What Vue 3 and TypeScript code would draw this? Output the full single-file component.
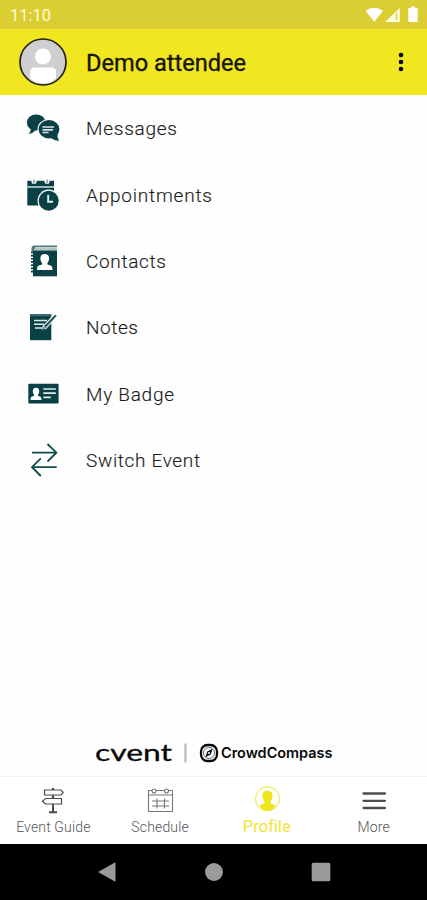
<script setup lang="ts">
interface MenuItem {
  id: string
  label: string
  width: number
}

const menu: MenuItem[] = [
  { id: 'messages', label: 'Messages', width: 91 },
  { id: 'appointments', label: 'Appointments', width: 126 },
  { id: 'contacts', label: 'Contacts', width: 80 },
  { id: 'notes', label: 'Notes', width: 52 },
  { id: 'badge', label: 'My Badge', width: 88 },
  { id: 'switch', label: 'Switch Event', width: 114 },
]
</script>

<template>
  <div class="screen">
    <div class="status">
      <span class="time">11:10</span>
      <svg class="status-icons" width="54" height="18" viewBox="0 0 54 18">
        <path d="M.5 4.700Q9.300-1.300 18 4.700L9.300 15.700Z" fill="#fff" />
        <path fill-rule="evenodd" d="M20 16 34.800 2v14Z M30.800 7v7h1.400V7Z" fill="#fffde0" />
        <path d="M44 2h2V.5h4V2h2q.7 0 .7.700v12.600q0 .7-.7.700h-8q-.7 0-.7-.700V2.700q0-.7.700-.700Z" fill="#fff" />
      </svg>
    </div>

    <header class="header">
      <svg class="avatar" width="50" height="50" viewBox="0 0 50 50">
        <circle cx="25" cy="25" r="23" fill="#cfcfd1" stroke="#222218" stroke-width="1.700" />
        <circle cx="25" cy="19.500" r="8" fill="#fff" />
        <path d="M12 41.500V35q0-4.500 4.500-4.500h17q4.500 0 4.500 4.500v6.500Q32.500 46.500 25 46.500T12 41.500Z" fill="#fff" />
      </svg>
      <h1 class="name">Demo attendee</h1>
      <svg class="kebab" width="6" height="22" viewBox="0 0 6 22">
        <circle cx="3" cy="4" r="2.300" />
        <circle cx="3" cy="11" r="2.300" />
        <circle cx="3" cy="18" r="2.300" />
      </svg>
    </header>

    <main class="menu">
      <div v-for="item in menu" :key="item.id" class="row">
        <svg class="row-icon" width="36" height="36" viewBox="0 -0.500 36 36">
          <g v-if="item.id === 'messages'">
            <ellipse cx="11.200" cy="12" rx="9.400" ry="8.100" fill="#0a4147" />
            <path d="M3.500 15 6 18q-.5 4-2.500 5.500Q8 23 11 19Z" fill="#0a4147" />
            <ellipse cx="24" cy="18.800" rx="11.500" ry="10.300" fill="#fff" />
            <ellipse cx="24" cy="18.800" rx="10.400" ry="9.200" fill="#0a4147" />
            <path d="M32.500 22q-.7 4.500 1.500 8.500-5-.5-9-3.500Z" fill="#0a4147" />
            <path d="M17.500 16.500h11.500M17.500 19.300h10.500M17.500 22h6" stroke="#d9e7e6" stroke-width="1.700" />
          </g>
          <g v-else-if="item.id === 'appointments'">
            <path d="M2.300 3.300H29V28H2.300Z" fill="#0a4147" />
            <path d="M2.300 9.500H29" stroke="#b9cccc" stroke-width="1.700" />
            <circle cx="9" cy="4" r="2.500" fill="#fff" />
            <circle cx="22" cy="4" r="2.500" fill="#fff" />
            <path d="M9 2v4M22 2v4" stroke="#6b8989" stroke-width="1.300" />
            <circle cx="23.700" cy="23.300" r="11.200" fill="#fff" />
            <circle cx="23.700" cy="23.300" r="10" fill="#0a4147" />
            <path d="M23.200 17.300v7h4.800" fill="none" stroke="#e6f2f1" stroke-width="1.900" />
          </g>
          <g v-else-if="item.id === 'contacts'">
            <path d="M6.500 8V5q0-3 3-3H32v1.500H11V6h21v2Z" fill="#54797b" />
            <path d="M10 3.800h22v3H9Z" fill="#b4c5c5" />
            <path d="M8 7.500h24v25.300H8Z" fill="#0a4147" />
            <path d="M7 8v22" stroke="#0a4147" stroke-width="2" stroke-dasharray="1.700 1.500" />
            <path d="M19.700 10.500c3.100 0 4.600 2 4.400 4.800-.1 1.900-.9 3.400-1.700 4.200v1.400l3.800 1.400q1.300.6 1.300 4.300H12q0-3.700 1.300-4.300l3.800-1.400v-1.400c-.8-.8-1.600-2.300-1.700-4.200-.2-2.800 1.200-4.800 4.300-4.800Z" fill="#fff" />
          </g>
          <g v-else-if="item.id === 'notes'">
            <path d="M5 4.700h21.300v26H5Z" fill="#0a4147" />
            <path d="M5 6.200h21" stroke="#517779" stroke-width="1" />
            <path d="M9 11h13M9 14.800h10M10 18.600h8" stroke="#e1ecec" stroke-width="1.500" />
            <path d="M19 18.500 31.500 5" stroke="#fff" stroke-width="4.500" />
            <path d="m16.500 21 2.500-4.500L30.500 5l1.500 1.300L21 18.700Z" fill="#7e9c9d" />
            <path d="m20 17 10.500-11" stroke="#0a4147" stroke-width="1.200" />
          </g>
          <g v-else-if="item.id === 'badge'">
            <rect x="3.300" y="7.300" width="30.300" height="19.700" rx="1" fill="#0a4147" />
            <path d="M11 11.300c2.300 0 3.400 1.500 3.200 3.700-.1 1.500-.7 2.600-1.300 3.200v1l2.600 1.100q1 .5 1 3.300h-11q0-2.800 1-3.300l2.600-1.100v-1c-.6-.6-1.200-1.700-1.300-3.200-.2-2.200.9-3.700 3.200-3.700Z" fill="#fff" />
            <path d="M18.300 12.500h12.500M18.300 16.700h12.500M18.300 20.900h7.500" stroke="#e0ebeb" stroke-width="1.700" />
          </g>
          <g v-else fill="none" stroke="#12494d" stroke-width="1.800">
            <path d="M7 10.200h24M22.500 1.500l8.900 8.700-8.900 8.800" />
            <path d="M31.700 24.700H7.500M15.800 15.900 7 24.700l8.800 8.800" />
          </g>
        </svg>
        <svg class="row-label" width="200" height="28" viewBox="0 0 200 28">
          <text x="0" y="20.500" :textLength="item.width">{{ item.label }}</text>
        </svg>
      </div>
    </main>

    <div class="brands">
      <svg width="240" height="30" viewBox="0 0 240 30">
        <text class="cvent" x="0" y="22.800" textLength="77" lengthAdjust="spacingAndGlyphs">cvent</text>
        <path d="M90.500 5.500v19" stroke="#bdbdbd" stroke-width="2.400" />
        <rect x="106" y="7" width="16" height="16" rx="6.500" fill="none" stroke="#090909" stroke-width="2.300" />
        <circle cx="114" cy="15" r="5.500" fill="none" stroke="#444" stroke-width=".8" />
        <path d="m117.500 10.800-1.700 5.700-5.300 2.700 1.700-5.700Z" fill="#111" />
        <circle cx="114" cy="15" r="1" fill="#fff" />
        <text class="crowd" x="126" y="20.200" textLength="111.500" lengthAdjust="spacingAndGlyphs">CrowdCompass</text>
      </svg>
    </div>

    <nav class="tabs">
      <div class="tab">
        <svg width="28" height="28" viewBox="0 0 28 28" fill="none" stroke="#4c4c4c" stroke-width="1.200">
          <path d="M5.500 4H22l2.300 2.500L22 9H5.500ZM22.500 12.500H6.500L3.500 15.200l3 2.800h16Z" />
          <path d="M14 2v2M14 9v3.500" stroke-width="2.200" />
          <path d="M14 18v8M10 26.300h8" stroke-width="2" />
        </svg>
        <span>Event Guide</span>
      </div>
      <div class="tab">
        <svg width="28" height="28" viewBox="0 0 28 28" fill="none" stroke="#777" stroke-width="1.100">
          <path d="M6 4.500H2.500V25.500h24V4.500h-4M10 4.500h8M2.500 9h24" />
          <circle cx="8" cy="5" r="2" />
          <circle cx="20.500" cy="5" r="2" />
          <path d="M6 15h17M6 20h17M11 12.500v10M18.500 12.500v10" />
        </svg>
        <span>Schedule</span>
      </div>
      <div class="tab active">
        <svg width="28" height="28" viewBox="0 0 28 28">
          <circle cx="14.500" cy="12.800" r="12" fill="none" stroke="#efe52a" stroke-width="1" />
          <path d="M14.500 4.800c3.900 0 5.500 2.700 5 6.200-.2 2-1 3.500-1.900 4.500v1.700l5 2.200q-3 5.200-8.100 5.200t-8.100-5.200l5-2.200v-1.700c-.9-1-1.700-2.500-1.900-4.500-.5-3.500 1.100-6.200 5-6.200Z" fill="#f0e51b" />
        </svg>
        <span>Profile</span>
      </div>
      <div class="tab">
        <svg width="28" height="28" viewBox="0 0 28 28" stroke="#4d4d4f" stroke-width="2.300" stroke-linecap="round">
          <path d="M3.500 7.500h21.400M3.500 14.800h21.400M3.500 22h21.400" />
        </svg>
        <span>More</span>
      </div>
    </nav>

    <div class="system">
      <svg width="20" height="22" viewBox="0 0 20 22"><path d="M1 11 18.500 1.200v19.600Z" /></svg>
      <svg width="20" height="22" viewBox="0 0 20 22"><circle cx="10" cy="11" r="9" /></svg>
      <svg width="20" height="22" viewBox="0 0 20 22"><rect x=".7" y="1.700" width="18.600" height="18.600" rx="1.500" /></svg>
    </div>
  </div>
</template>

<style>
body {
  margin: 0;
}
</style>

<style scoped>
.screen {
  width: 427px;
  height: 900px;
  display: flex;
  flex-direction: column;
  overflow: hidden;
  background: #fefefe;
  font-family: Roboto, "Liberation Sans", sans-serif;
}
svg {
  display: block;
  flex: none;
}
.status {
  flex: none;
  box-sizing: border-box;
  height: 28.500px;
  padding: 2px 8px 0 10px;
  display: flex;
  align-items: center;
  justify-content: space-between;
  background: #dace32;
}
.time {
  font-size: 16.500px;
  color: #fffbd8;
}
.header {
  flex: none;
  box-sizing: border-box;
  height: 66.800px;
  padding: 0 23px 0 18.300px;
  display: flex;
  align-items: center;
  background: #f1e720;
}
.name {
  flex: 1;
  margin: 2px 0 0 17.700px;
  font-size: 23.600px;
  font-weight: 400;
  -webkit-text-stroke: 0.350px #16160a;
  color: #16160a;
}
.menu {
  flex: 1;
}
.row {
  height: 66.300px;
  display: flex;
  align-items: center;
  padding-left: 25px;
}
.row-label {
  margin-left: 25.200px;
  font-size: 19px;
  font-weight: 350;
  fill: #1c1c1c;
  stroke: #1c1c1c;
  stroke-width: 0.150px;
}
.brands {
  flex: none;
  height: 38px;
  padding-left: 95px;
}
.cvent {
  font: 400 24px Lato, sans-serif;
  fill: #080808;
  stroke: #080808;
  stroke-width: 0.300px;
}
.crowd {
  font: 600 14.500px Inter, sans-serif;
  fill: #080808;
}
.tabs {
  flex: none;
  box-sizing: border-box;
  height: 68px;
  padding-top: 9px;
  display: grid;
  grid-template-columns: repeat(4, 1fr);
  border-top: 1px solid #efefef;
  background: #fff;
}
.tab {
  display: flex;
  flex-direction: column;
  align-items: center;
  gap: 4px;
  font-size: 14px;
  font-weight: 300;
  line-height: 18px;
  color: #555;
}
.tab span {
  letter-spacing: 0.150px;
}
.active {
  gap: 3.500px;
  font-size: 16.300px;
  font-weight: 400;
  color: #f0e530;
}
.system {
  flex: none;
  height: 56px;
  display: flex;
  align-items: center;
  justify-content: center;
  gap: 87px;
  background: #000;
  fill: #9b9b9b;
}
</style>
